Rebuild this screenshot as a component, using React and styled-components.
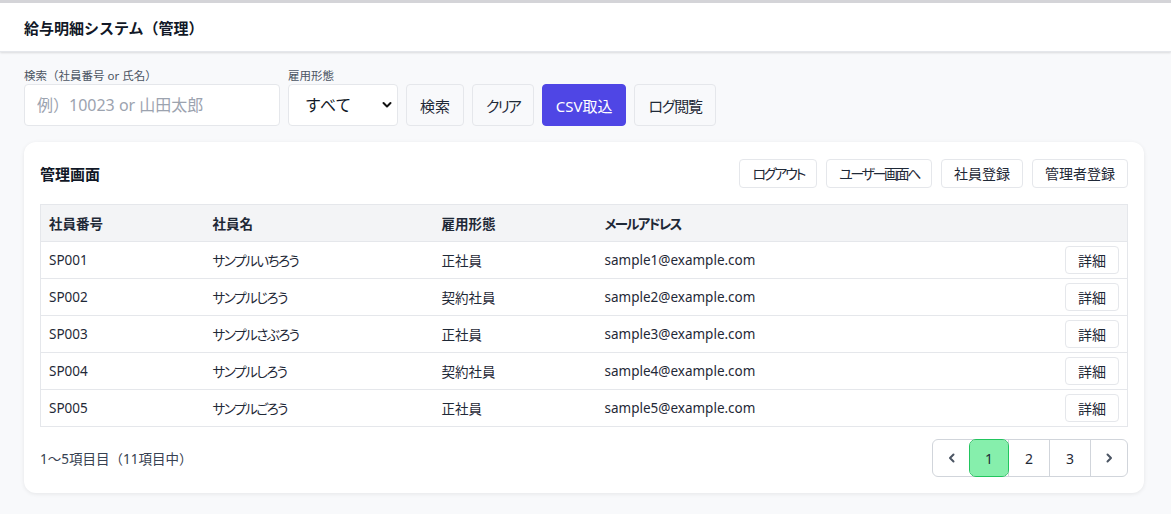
import React from "react";
import styled, { createGlobalStyle } from "styled-components";

const Global = createGlobalStyle`
  * { box-sizing: border-box; }
  html, body { margin: 0; padding: 0; }
  body {
    background: #f8f9fb;
    font-family: "Noto Sans", "Noto Sans CJK JP", sans-serif;
    color: #1f2937;
    border-top: 3px solid #d4d4d8;
  }
`;

const Header = styled.header`
  height: 49px;
  background: #fff;
  display: flex;
  align-items: center;
  padding: 0 24px;
  box-shadow: 0 1px 2px rgba(0, 0, 0, 0.12);
  border-bottom: 1px solid #e5e7eb;
`;

const Title = styled.h1`
  margin: 0;
  font-size: 15px;
  font-weight: 700;
  color: #111827;
`;

const Main = styled.main`
  padding: 16px 24px;
  width: 1168px;
`;

const Filters = styled.div`
  display: flex;
  align-items: flex-end;
  gap: 8px;
`;

const Field = styled.label`
  display: flex;
  flex-direction: column;
  gap: 1px;
`;

const FieldLabel = styled.span`
  font-size: 11.5px;
  line-height: 15px;
  color: #4b5563;
`;

const Input = styled.input`
  width: 256px;
  height: 42px;
  border: 1px solid #e5e7eb;
  border-radius: 4px;
  background: #fff;
  padding: 0 12px;
  font-size: 16px;
  font-family: inherit;
  color: #111827;
  &::placeholder { color: #9ca3af; }
`;

const SelectWrap = styled.div`
  position: relative;
  width: 110px;
`;

const Select = styled.select`
  appearance: none;
  width: 100%;
  height: 42px;
  border: 1px solid #e5e7eb;
  border-radius: 4px;
  background: #fff;
  padding: 0 16px;
  font-size: 16px;
  font-family: inherit;
  color: #111827;
`;

const Chevron = styled.svg`
  position: absolute;
  right: 6px;
  top: 17px;
  pointer-events: none;
`;

const Btn = styled.button`
  height: 42px;
  padding: 0 13px;
  border: 1px solid ${(p) => (p.$primary ? "#4f46e5" : "#e5e7eb")};
  border-radius: 4px;
  background: ${(p) => (p.$primary ? "#4f46e5" : "#f8f9fb")};
  color: ${(p) => (p.$primary ? "#fff" : "#1f2937")};
  font-size: 15px;
  font-family: inherit;
  font-feature-settings: "palt";
  letter-spacing: ${(p) => p.$ls || 0}px;
  cursor: pointer;
`;

const Card = styled.section`
  margin-top: 16px;
  background: #fff;
  border-radius: 12px;
  box-shadow: 0 1px 4px rgba(0, 0, 0, 0.08);
  padding: 16px;
  display: flex;
  flex-direction: column;
`;

const CardHead = styled.div`
  display: flex;
  align-items: center;
  justify-content: space-between;
  height: 30px;
`;

const CardTitle = styled.h2`
  margin: 0;
  font-size: 15px;
  font-weight: 700;
  color: #111827;
`;

const Actions = styled.div`
  display: flex;
  gap: 9px;
`;

const SmallBtn = styled.button`
  height: ${(p) => p.$h || 29}px;
  padding: 0 12px;
  border: 1px solid #e5e7eb;
  border-radius: 4px;
  background: #fff;
  color: #1f2937;
  font-size: 14px;
  font-family: inherit;
  font-feature-settings: "palt";
  letter-spacing: ${(p) => p.$ls || 0}px;
  cursor: pointer;
`;

const Table = styled.table`
  margin-top: 16px;
  width: 100%;
  border-collapse: collapse;
  border: 1px solid #e5e7eb;
  font-size: 13.5px;
  font-feature-settings: "palt";
`;

const Th = styled.th`
  background: #f3f4f6;
  text-align: left;
  font-weight: 700;
  height: 37px;
  padding: 0 8px;
  border-bottom: 1px solid #e5e7eb;
  color: #1f2937;
  letter-spacing: ${(p) => p.$ls || 0}px;
`;

const Td = styled.td`
  height: 37px;
  padding: 0 8px;
  border-bottom: 1px solid #e5e7eb;
  text-align: ${(p) => (p.$right ? "right" : "left")};
  color: #1f2937;
  letter-spacing: ${(p) => p.$ls || 0}px;
`;

const Footer = styled.div`
  margin-top: 12px;
  display: flex;
  align-items: center;
  justify-content: space-between;
`;

const Count = styled.span`
  font-size: 13.5px;
  color: #374151;
`;

const Pager = styled.nav`
  display: flex;
  border: 1px solid #d1d5db;
  border-radius: 6px;
  height: 38px;
`;

const PageBtn = styled.button`
  width: ${(p) => p.$w}px;
  height: 36px;
  border: none;
  border-left: ${(p) => (p.$first ? "none" : "1px solid #d1d5db")};
  background: transparent;
  font-size: 14px;
  font-family: inherit;
  color: #1f2937;
  display: flex;
  align-items: center;
  justify-content: center;
  padding: 0;
  cursor: pointer;
  ${(p) =>
    p.$active &&
    `
    background: #86efac;
    outline: 1px solid #22c55e;
    border-radius: 6px;
    border-left: none;
    position: relative;
    z-index: 1;
  `}
`;

const rows = [
  ["SP001", "サンプルいちろう", "正社員", "sample1@example.com"],
  ["SP002", "サンプルじろう", "契約社員", "sample2@example.com"],
  ["SP003", "サンプルさぶろう", "正社員", "sample3@example.com"],
  ["SP004", "サンプルしろう", "契約社員", "sample4@example.com"],
  ["SP005", "サンプルごろう", "正社員", "sample5@example.com"],
];

const Arrow = ({ dir }) => (
  <svg width="12" height="12" viewBox="0 0 12 12">
    <path
      d={dir === "left" ? "M7.5 2.5 L4 6 L7.5 9.5" : "M4.5 2.5 L8 6 L4.5 9.5"}
      fill="none"
      stroke="#4b5563"
      strokeWidth="2"
      strokeLinecap="round"
      strokeLinejoin="round"
    />
  </svg>
);

export default function App() {
  return (
    <>
      <Global />
      <Header>
        <Title>給与明細システム（管理）</Title>
      </Header>
      <Main>
        <Filters>
          <Field>
            <FieldLabel>検索（社員番号 or 氏名）</FieldLabel>
            <Input placeholder="例）10023 or 山田太郎" />
          </Field>
          <Field>
            <FieldLabel>雇用形態</FieldLabel>
            <SelectWrap>
              <Select defaultValue="all">
                <option value="all">すべて</option>
                <option value="full">正社員</option>
                <option value="contract">契約社員</option>
              </Select>
              <Chevron width="10" height="8" viewBox="0 0 10 8">
                <path d="M1.5 2 L5 5.5 L8.5 2" fill="none" stroke="#111" strokeWidth="2" strokeLinecap="round" strokeLinejoin="round" />
              </Chevron>
            </SelectWrap>
          </Field>
          <Btn>検索</Btn>
          <Btn $ls={-2}>クリア</Btn>
          <Btn $primary>CSV取込</Btn>
          <Btn $ls={-1.2}>ログ閲覧</Btn>
        </Filters>

        <Card>
          <CardHead>
            <CardTitle>管理画面</CardTitle>
            <Actions>
              <SmallBtn $ls={-2.2}>ログアウト</SmallBtn>
              <SmallBtn $ls={-2.4}>ユーザー画面へ</SmallBtn>
              <SmallBtn>社員登録</SmallBtn>
              <SmallBtn>管理者登録</SmallBtn>
            </Actions>
          </CardHead>
          <Table>
            <colgroup>
              <col style={{ width: 164 }} />
              <col style={{ width: 229 }} />
              <col style={{ width: 163 }} />
              <col />
              <col style={{ width: 80 }} />
            </colgroup>
            <thead>
              <tr>
                <Th>社員番号</Th>
                <Th>社員名</Th>
                <Th>雇用形態</Th>
                <Th $ls={-1.7}>メールアドレス</Th>
                <Th></Th>
              </tr>
            </thead>
            <tbody>
              {rows.map((r) => (
                <tr key={r[0]}>
                  <Td>{r[0]}</Td>
                  <Td $ls={-1.4}>{r[1]}</Td>
                  <Td>{r[2]}</Td>
                  <Td>{r[3]}</Td>
                  <Td $right>
                    <SmallBtn $h={28}>詳細</SmallBtn>
                  </Td>
                </tr>
              ))}
            </tbody>
          </Table>
          <Footer>
            <Count>1〜5項目目（11項目中）</Count>
            <Pager>
              <PageBtn $w={37} $first><Arrow dir="left" /></PageBtn>
              <PageBtn $w={38} $active>1</PageBtn>
              <PageBtn $w={41}>2</PageBtn>
              <PageBtn $w={41}>3</PageBtn>
              <PageBtn $w={37}><Arrow dir="right" /></PageBtn>
            </Pager>
          </Footer>
        </Card>
      </Main>
    </>
  );
}
